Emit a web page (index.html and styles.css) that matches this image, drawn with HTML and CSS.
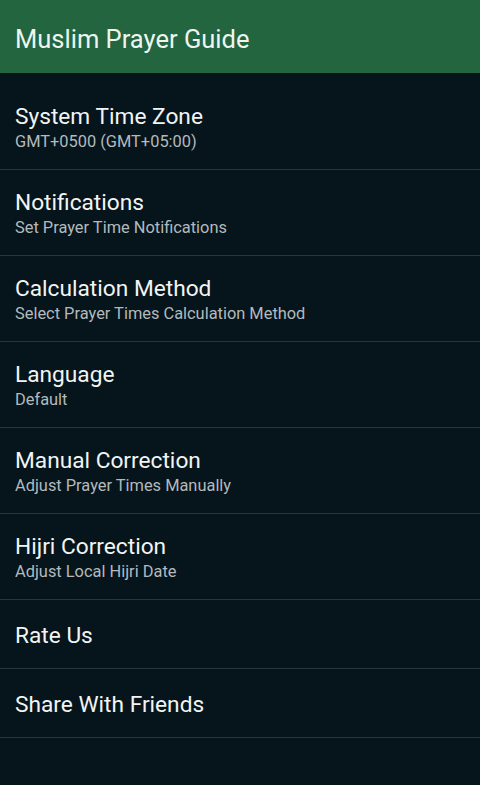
FILE: index.html
```html
<!DOCTYPE html>
<html lang="en">
<head>
  <meta charset="UTF-8" />
  <meta name="viewport" content="width=device-width, initial-scale=1.0"/>
  <title>Muslim Prayer Guide</title>
  <link rel="stylesheet" href="styles.css">
</head>
<body>

  <header class="app-bar">Muslim Prayer Guide</header>

  <ul class="settings">
    <li class="item">
      <div class="item-title">System Time Zone</div>
      <div class="item-sub">GMT+0500 (GMT+05:00)</div>
    </li>
    <li class="item">
      <div class="item-title">Notifications</div>
      <div class="item-sub">Set Prayer Time Notifications</div>
    </li>
    <li class="item">
      <div class="item-title">Calculation Method</div>
      <div class="item-sub">Select Prayer Times Calculation Method</div>
    </li>
    <li class="item">
      <div class="item-title">Language</div>
      <div class="item-sub">Default</div>
    </li>
    <li class="item">
      <div class="item-title">Manual Correction</div>
      <div class="item-sub">Adjust Prayer Times Manually</div>
    </li>
    <li class="item">
      <div class="item-title">Hijri Correction</div>
      <div class="item-sub">Adjust Local Hijri Date</div>
    </li>
    <li class="item single">
      <div class="item-title">Rate Us</div>
    </li>
    <li class="item single">
      <div class="item-title">Share With Friends</div>
    </li>
  </ul>

</body>
</html>
```

FILE: styles.css
```css
body {
  margin: 0;
  font-family: Roboto, "Noto Sans", sans-serif;
  background: #06141b;
  color: #f2f4f4;
  height: 785px;
  overflow: hidden;
}

.app-bar {
  height: 73px;
  box-sizing: border-box;
  padding: 5px 15px 0;
  display: flex;
  align-items: center;
  background: #22653f;
  color: #eef5ef;
  font-size: 25.5px;
}

.settings {
  list-style: none;
  margin: 0;
  padding: 11px 0 0;
}

.item {
  height: 86px;
  box-sizing: border-box;
  padding: 20px 15px 0;
  border-bottom: 1px solid #26363d;
}

.item.single {
  height: 69px;
  padding-top: 23px;
}

.item-title {
  font-size: 22.7px;
  line-height: 26px;
}

.item-sub {
  font-size: 16.4px;
  line-height: 24px;
  color: #b3babd;
}
```
